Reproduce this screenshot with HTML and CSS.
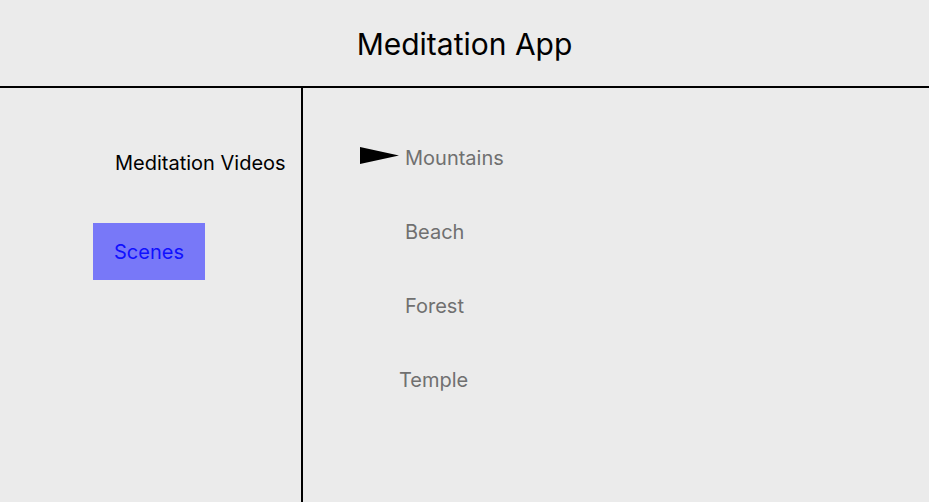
FILE: index.html
```html
<!DOCTYPE html>
<html>
<head>
<meta charset="utf-8">
<link rel="stylesheet" href="styles.css">
</head>
<body>
<div class="app">
  <header class="header">
    <h1 class="title">Meditation App</h1>
  </header>
  <div class="body">
    <aside class="sidebar">
      <div class="side-heading">Meditation Videos</div>
      <button class="scenes-btn">Scenes</button>
    </aside>
    <main class="main">
      <ul class="scene-list">
        <li class="scene-item selected">
          <svg class="pointer" width="40" height="18" viewBox="0 0 40 18"><polygon points="0,0 0,17 39,8.5" fill="#000"/></svg>
          <span>Mountains</span>
        </li>
        <li class="scene-item"><span>Beach</span></li>
        <li class="scene-item"><span>Forest</span></li>
        <li class="scene-item shifted"><span>Temple</span></li>
      </ul>
    </main>
  </div>
</div>
</body>
</html>
```

FILE: styles.css
```css
* { box-sizing: border-box; }
html, body { margin: 0; padding: 0; }
body {
  background: #ebebeb;
  font-family: Inter, "Noto Sans", sans-serif;
  width: 929px;
  height: 502px;
  overflow: hidden;
}
.app { display: flex; flex-direction: column; height: 502px; }
.header {
  height: 88px;
  border-bottom: 2px solid #000;
  display: flex;
  align-items: center;
  justify-content: center;
}
.title {
  margin: 0;
  padding-top: 2px;
  font-weight: 400;
  font-size: 30px;
  line-height: 36px;
  color: #000;
}
.body { flex: 1; display: flex; }
.sidebar {
  width: 303px;
  border-right: 2px solid #000;
  display: flex;
  flex-direction: column;
  align-items: flex-start;
  padding-top: 63px;
}
.side-heading {
  font-size: 20px;
  color: #000;
  margin-left: 115px;
  line-height: 24px;
}
.scenes-btn {
  margin-top: 48px;
  margin-left: 93px;
  width: 112px;
  height: 57px;
  border: none;
  background: #7878f8;
  color: #1010ff;
  font-family: Inter, sans-serif;
  font-size: 20px;
  padding: 0;
}
.main { flex: 1; }
.scene-list {
  list-style: none;
  margin: 0;
  padding: 58px 0 0 57px;
}
.scene-item {
  display: flex;
  align-items: center;
  height: 24px;
  margin-bottom: 50px;
  padding-left: 45px;
  font-size: 20px;
  color: #707070;
  line-height: 24px;
}
.scene-item.selected { padding-left: 0; }
.pointer {
  width: 40px;
  height: 18px;
  margin-right: 5px;
  align-self: flex-start;
  margin-top: 1px;
}
.scene-item.shifted { padding-left: 39px; }
```
